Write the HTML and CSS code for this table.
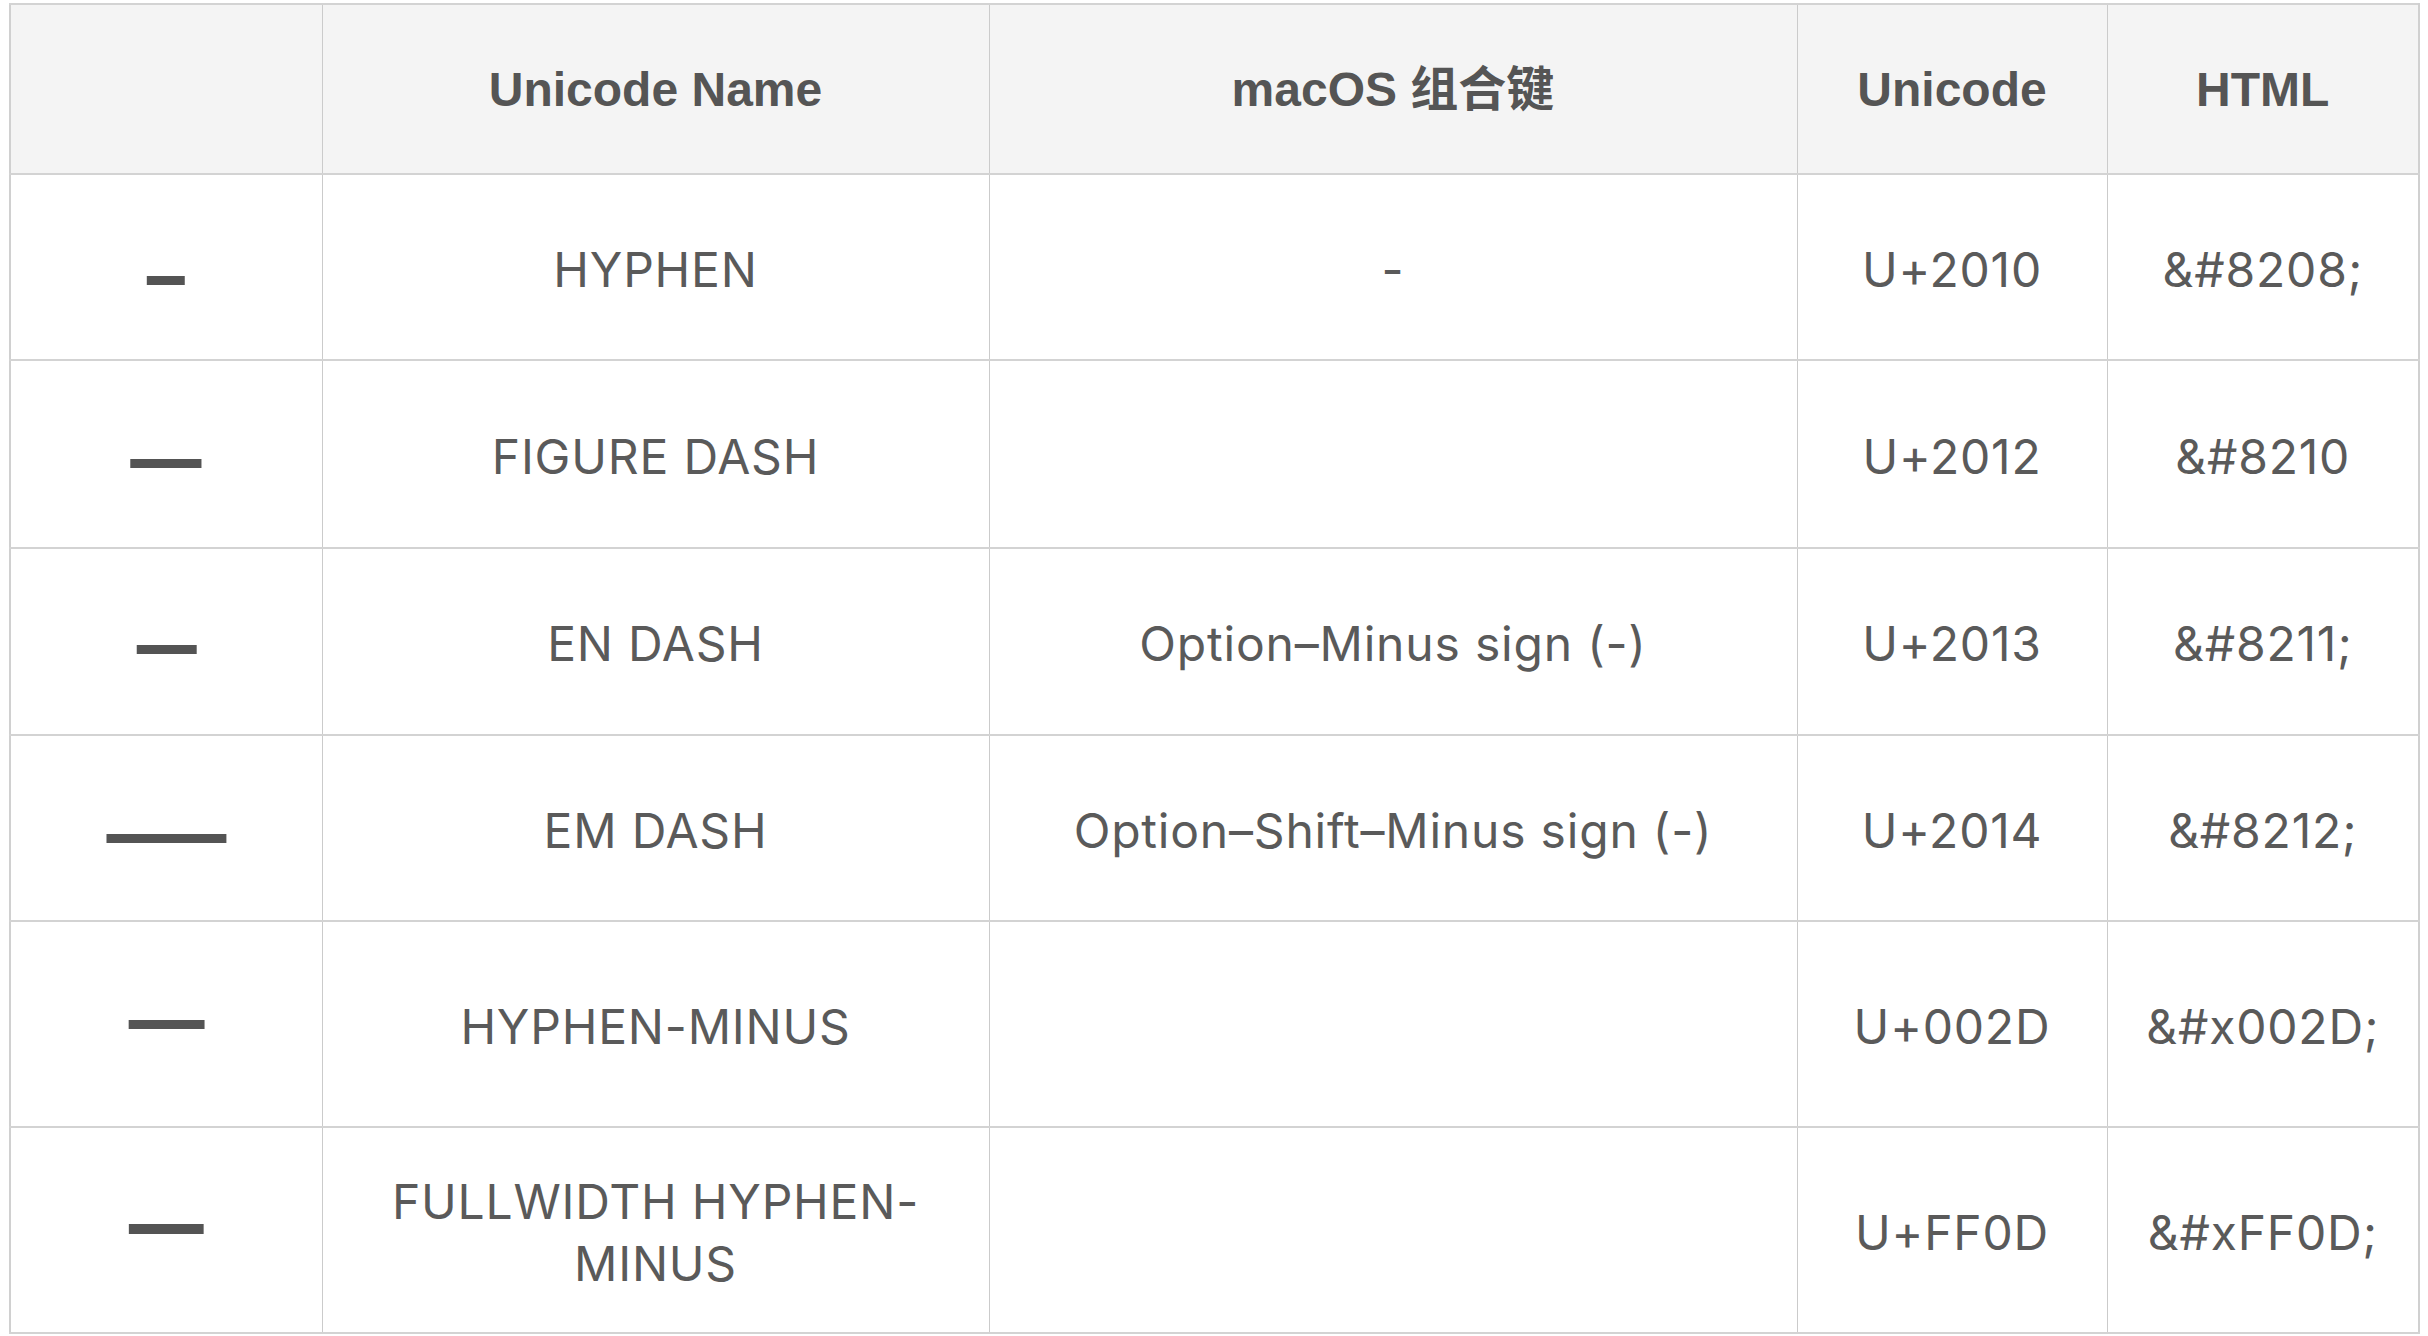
FILE: index.html
```html
<!DOCTYPE html>
<html lang="zh-CN">
<head>
<meta charset="utf-8">
<title>Dashes</title>
<link rel="stylesheet" href="styles.css">
</head>
<body>
<table class="dash-table">
  <colgroup>
    <col class="c-glyph">
    <col class="c-name">
    <col class="c-keys">
    <col class="c-code">
    <col class="c-html">
  </colgroup>
  <thead>
    <tr class="head-row">
      <th></th>
      <th>Unicode Name</th>
      <th>macOS 组合键</th>
      <th>Unicode</th>
      <th>HTML</th>
    </tr>
  </thead>
  <tbody>
    <tr class="row r1">
      <td class="glyph-cell"><div class="glyph-box"><span class="glyph g-hyphen">&#x2010;</span></div></td>
      <td>HYPHEN</td>
      <td>-</td>
      <td>U+2010</td>
      <td>&amp;#8208;</td>
    </tr>
    <tr class="row r2">
      <td class="glyph-cell"><div class="glyph-box"><span class="glyph g-figure">&#x2012;</span></div></td>
      <td>FIGURE DASH</td>
      <td></td>
      <td>U+2012</td>
      <td>&amp;#8210</td>
    </tr>
    <tr class="row r3">
      <td class="glyph-cell"><div class="glyph-box"><span class="glyph g-en">&#x2013;</span></div></td>
      <td>EN DASH</td>
      <td>Option–Minus sign (-)</td>
      <td>U+2013</td>
      <td>&amp;#8211;</td>
    </tr>
    <tr class="row r4">
      <td class="glyph-cell"><div class="glyph-box"><span class="glyph g-em">&#x2014;</span></div></td>
      <td>EM DASH</td>
      <td>Option–Shift–Minus sign (-)</td>
      <td>U+2014</td>
      <td>&amp;#8212;</td>
    </tr>
    <tr class="row r5">
      <td class="glyph-cell"><div class="glyph-box"><span class="glyph g-minus">-</span></div></td>
      <td>HYPHEN-MINUS</td>
      <td></td>
      <td>U+002D</td>
      <td>&amp;#x002D;</td>
    </tr>
    <tr class="row r6">
      <td class="glyph-cell"><div class="glyph-box"><span class="glyph g-full">&#xFF0D;</span></div></td>
      <td>FULLWIDTH HYPHEN-MINUS</td>
      <td></td>
      <td>U+FF0D</td>
      <td>&amp;#xFF0D;</td>
    </tr>
  </tbody>
</table>
</body>
</html>
```
FILE: styles.css
```css
html, body {
  margin: 0;
  padding: 0;
  background: #ffffff;
}

.dash-table {
  margin: 3px 0 0 9px;
  width: 2411px;
  table-layout: fixed;
  border-collapse: collapse;
  font-family: "Inter", "Noto Sans CJK SC", sans-serif;
  font-size: 48px;
  letter-spacing: 0.8px;
  line-height: 1.3;
  color: #5a5a5a;
}

.c-glyph { width: 312px; }
.c-name { width: 667px; }
.c-keys { width: 808px; }
.c-code { width: 310px; }
.c-html { width: 312px; }

.dash-table th,
.dash-table td {
  padding: 6px 16px 0;
  text-align: center;
  vertical-align: middle;
  border-top: 2px solid #d3d3d3;
  border-bottom: 2px solid #d3d3d3;
  border-left: 1px solid #cbcbcb;
  border-right: 1px solid #cbcbcb;
}

.dash-table td.glyph-cell {
  padding: 0 16px;
}

.dash-table th:first-child,
.dash-table td:first-child {
  border-left: 2px solid #d0d0d0;
}

.dash-table th:last-child,
.dash-table td:last-child {
  border-right: 2px solid #d0d0d0;
}

.head-row {
  height: 170px;
  background: #f4f4f4;
}

.dash-table th {
  padding: 3px 16px 0;
  font-family: "Liberation Sans", "Noto Sans CJK SC", sans-serif;
  font-weight: 700;
  letter-spacing: 0;
  color: #555555;
}

.r1 { height: 186px; }
.r2 { height: 188px; }
.r3 { height: 187px; }
.r4 { height: 186px; }
.r5 { height: 206px; }
.r6 { height: 206px; }

.glyph-box {
  display: flex;
  justify-content: center;
  align-items: center;
}

.glyph {
  display: block;
  font-family: "Inter", sans-serif;
  font-size: 111px;
  line-height: 1;
  letter-spacing: 0;
  color: #545454;
}

.g-hyphen { transform: translateY(6.6px) scaleX(1.07); }
.g-figure { transform: translateY(4.7px) scaleX(1.16); }
.g-en { transform: translateY(2px) scaleX(1.08); }
.g-em { transform: translateY(3.6px) scaleX(1.08); }
.g-minus { transform: translateY(-6.4px) scaleX(2.14); }
.g-full {
  font-family: "Noto Sans CJK SC", sans-serif;
  font-size: 103px;
  transform: translateY(-9.8px) scale(1, 1.4);
}
```
